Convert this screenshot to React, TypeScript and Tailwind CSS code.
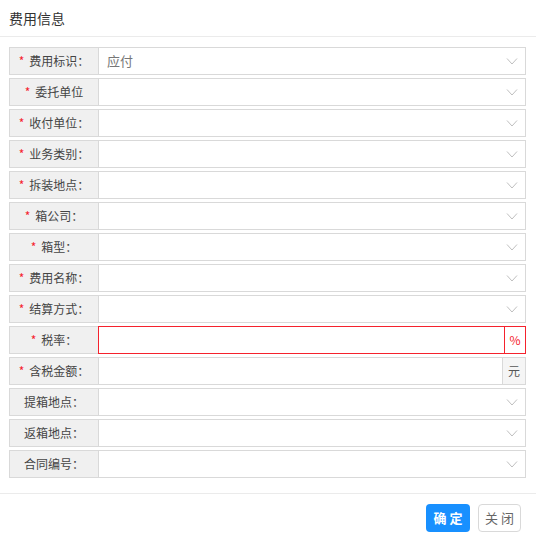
import type { ReactNode } from "react";

type Field = {
  label: string;
  required?: boolean;
  value?: string;
  kind?: "select" | "percent" | "yuan";
};

const fields: Field[] = [
  { label: "费用标识：", required: true, value: "应付" },
  { label: "委托单位", required: true },
  { label: "收付单位：", required: true },
  { label: "业务类别：", required: true },
  { label: "拆装地点：", required: true },
  { label: "箱公司：", required: true },
  { label: "箱型：", required: true },
  { label: "费用名称：", required: true },
  { label: "结算方式：", required: true },
  { label: "税率：", required: true, kind: "percent" },
  { label: "含税金额：", required: true, kind: "yuan" },
  { label: "提箱地点：" },
  { label: "返箱地点：" },
  { label: "合同编号：" },
];

function Chevron() {
  return (
    <svg width="12" height="7" viewBox="0 0 12 7" className="shrink-0">
      <path d="M1 0.5 L6 6 L11 0.5" fill="none" stroke="#bfbfbf" strokeWidth="1" />
    </svg>
  );
}

function Row({ field }: { field: Field }) {
  let input: ReactNode;
  if (field.kind === "percent") {
    input = (
      <div className="flex flex-1 border border-[#f5222d]">
        <div className="flex-1" />
        <div className="w-[21px] border-l border-[#f5222d] flex items-center justify-center text-[12px] text-[#f5222d]">
          %
        </div>
      </div>
    );
  } else if (field.kind === "yuan") {
    input = (
      <div className="flex flex-1 border border-[#d9d9d9]">
        <div className="flex-1" />
        <div className="w-[23px] border-l border-[#d9d9d9] bg-[#f5f5f5] flex items-center justify-center text-[12px] text-[#555]">
          元
        </div>
      </div>
    );
  } else {
    input = (
      <div className="flex flex-1 items-center border border-[#d9d9d9] pl-[8px] pr-[7px]">
        <span className="flex-1 text-[13px] text-[#777]">{field.value}</span>
        <Chevron />
      </div>
    );
  }
  return (
    <div className="flex h-[28px]">
      <div className="w-[89px] flex items-center justify-center bg-[#f0f0f0] border-l border-t border-b border-[#d9d9d9] text-[12px] text-[#444]">
        {field.required && <span className="text-[#f5222d] mr-[5px]">*</span>}
        <span>{field.label}</span>
      </div>
      {input}
    </div>
  );
}

export default function App() {
  return (
    <div
      className="w-[536px] h-[542px] bg-white flex flex-col"
      style={{ fontFamily: '"Noto Sans CJK SC", "Noto Sans", sans-serif' }}
    >
      <div className="h-[37px] border-b border-[#ebebeb] flex items-center pl-[9px] text-[14px] text-[#333]">
        费用信息
      </div>
      <div className="flex flex-col gap-[3px] pt-[10px] pl-[9px] pr-[10px]">
        {fields.map((f) => (
          <Row key={f.label} field={f} />
        ))}
      </div>
      <div className="mt-[15px] border-t border-[#ebebeb] flex justify-end gap-[8px] pt-[10px] pr-[15px]">
        <button className="w-[44px] h-[28px] rounded-[4px] bg-[#1890ff] text-white text-[13px] font-bold tracking-[3px] pl-[3px]">
          确定
        </button>
        <button className="w-[43px] h-[28px] rounded-[4px] border border-[#d9d9d9] bg-white text-[#666] text-[13px] tracking-[3px] pl-[3px]">
          关闭
        </button>
      </div>
    </div>
  );
}
